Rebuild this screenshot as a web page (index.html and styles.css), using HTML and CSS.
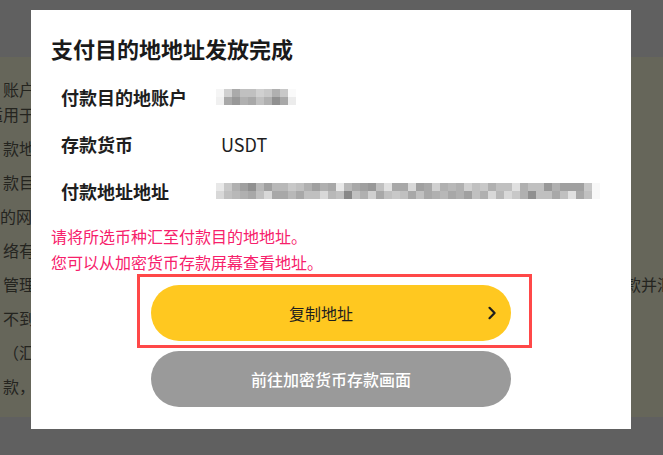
FILE: index.html
```html
<!DOCTYPE html>
<html lang="zh-CN">
<head>
<meta charset="utf-8">
<title>支付目的地地址发放完成</title>
<link rel="stylesheet" href="styles.css">
</head>
<body>
<div class="page">
  <div class="page-header"></div>
  <div class="page-content">
    <p class="para">
      <span class="line">账户名</span>
      <span class="line shift">适用于</span>
    </p>
    <p class="item">款地址</p>
    <p class="item">款目的</p>
    <p class="item shift-s">的网络</p>
    <p class="item">络有误</p>
    <p class="item split"><span>管理员</span><span class="tail">款并汇</span></p>
    <p class="item">不到账</p>
    <p class="item">（汇款</p>
    <p class="item">款，请</p>
  </div>
  <div class="page-footer"></div>
</div>

<div class="modal">
  <h1 class="modal-title">支付目的地地址发放完成</h1>
  <dl class="info">
    <div class="info-row">
      <dt class="info-label">付款目的地账户</dt>
      <dd class="info-value"><span class="blur blur-short"></span></dd>
    </div>
    <div class="info-row">
      <dt class="info-label">存款货币</dt>
      <dd class="info-value">USDT</dd>
    </div>
    <div class="info-row">
      <dt class="info-label">付款地址地址</dt>
      <dd class="info-value"><span class="blur blur-long"></span></dd>
    </div>
  </dl>
  <div class="notes">
    <p class="note">请将所选币种汇至付款目的地地址。</p>
    <p class="note">您可以从加密货币存款屏幕查看地址。</p>
  </div>
  <div class="actions">
    <div class="copy-wrap">
      <button class="btn btn-copy" type="button">
        <span class="btn-label">复制地址</span>
        <svg class="chevron" width="10" height="14" viewBox="0 0 10 14" aria-hidden="true">
          <path d="M2.5 1.8 L7.6 7 L2.5 12.2" fill="none" stroke="#1e1e1e" stroke-width="2.2" stroke-linecap="round" stroke-linejoin="round"/>
        </svg>
      </button>
      <div class="highlight"></div>
    </div>
    <button class="btn btn-gray" type="button">前往加密货币存款画面</button>
  </div>
</div>
</body>
</html>
```

FILE: styles.css
```css
* {
  box-sizing: border-box;
}

html, body {
  margin: 0;
  padding: 0;
}

body {
  width: 663px;
  height: 455px;
  overflow: hidden;
  position: relative;
  font-family: "Noto Sans CJK SC", "Noto Sans", sans-serif;
  background: #606060;
}

/* ---------- dimmed page behind the dialog ---------- */
.page {
  display: flex;
  flex-direction: column;
  height: 455px;
}

.page-header {
  height: 57px;
  background: #606060;
  flex: none;
}

.page-content {
  height: 360px;
  flex: none;
  background: #66665a;
  padding: 20px 0 0 3px;
  overflow: hidden;
  color: #24241f;
  font-size: 16px;
  white-space: nowrap;
}

.page-footer {
  flex: 1;
  background: #606060;
}

.para {
  margin: 0;
  line-height: 25px;
}

.para .line {
  display: block;
}

.item {
  margin: 9px 0 0;
  line-height: 25px;
}

.split {
  display: flex;
  justify-content: space-between;
}

.split .tail {
  margin-right: -10px;
}

.shift {
  margin-left: -16px;
}

.shift-s {
  margin-left: -3px;
}

/* ---------- dialog ---------- */
.modal {
  position: absolute;
  left: 31px;
  top: 10px;
  width: 600px;
  background: #ffffff;
  padding: 23px 20px 22px;
  color: #1e1e1e;
}

.modal-title {
  margin: 0;
  font-size: 22px;
  font-weight: 700;
  line-height: 30px;
  color: #1a1a1a;
}

.info {
  margin: 10px 0 0;
  padding: 0;
}

.info-row {
  display: flex;
  align-items: center;
  height: 47px;
  padding-left: 10px;
}

.info-label {
  width: 160px;
  flex: none;
  margin: 0;
  font-size: 18px;
  font-weight: 700;
  color: #1e1e1e;
}

.info-value {
  margin: 0;
  font-size: 18px;
  color: #1e1e1e;
  display: flex;
  align-items: center;
}

.blur {
  display: block;
  height: 16px;
  margin-left: -5px;
  background-repeat: no-repeat;
  background-size: 100% 8px, 100% 8px;
  background-position: 0 0, 0 8px;
}

.blur-short {
  width: 80px;
  background-image:
    linear-gradient(to right, #f5f5f5 0 8px, #d0d0d0 8px 16px, #aaaaaa 16px 24px, #c0c0c0 24px 32px, #c0c0c0 32px 40px, #d0d0d0 40px 48px, #c8c8c8 48px 56px, #b0b0b0 56px 64px, #c8c8c8 64px 72px, #fafafa 72px 80px),
    linear-gradient(to right, #f0f0f0 0 8px, #a8a8a8 8px 16px, #989898 16px 24px, #b0b0b0 24px 32px, #a8a8a8 32px 40px, #c0c0c0 40px 48px, #b0b0b0 48px 56px, #909090 56px 64px, #a8a8a8 64px 72px, #ececec 72px 80px);
}

.blur-long {
  width: 384px;
  background-image:
    linear-gradient(to right,
      #e8e8e8 0 8px, #c8c8c8 8px 16px, #b0b0b0 16px 24px, #a0a0a0 24px 32px,
      #909090 32px 40px, #b8b8b8 40px 48px, #a0a0a0 48px 56px, #b8b8b8 56px 64px,
      #b8b8b8 64px 72px, #c8c8c8 72px 80px, #c0c0c0 80px 88px, #b0b0b0 88px 96px,
      #a0a0a0 96px 104px, #b0b0b0 104px 112px, #a8a8a8 112px 120px, #e8e8e8 120px 128px,
      #b8b8b8 128px 136px, #a8a8a8 136px 144px, #a0a0a0 144px 152px, #989898 152px 160px,
      #c0c0c0 160px 168px, #e0e0e0 168px 176px, #a8a8a8 176px 184px, #a8a8a8 184px 192px,
      #d8d8d8 192px 200px, #a0a0a0 200px 208px, #a8a8a8 208px 216px, #d0d0d0 216px 224px,
      #b0b0b0 224px 232px, #b8b8b8 232px 240px, #b0b0b0 240px 248px, #d0d0d0 248px 256px,
      #c0c0c0 256px 264px, #c8c8c8 264px 272px, #b0b0b0 272px 280px, #c0c0c0 280px 288px,
      #c0c0c0 288px 296px, #e0e0e0 296px 304px, #b0b0b0 304px 312px, #c0c0c0 312px 320px,
      #c0c0c0 320px 328px, #989898 328px 336px, #b0b0b0 336px 344px, #a0a0a0 344px 352px,
      #a0a0a0 352px 360px, #a0a0a0 360px 368px, #c8c8c8 368px 376px, #f8f8f8 376px 384px),
    linear-gradient(to right,
      #d8d8d8 0 8px, #c0c0c0 8px 16px, #b8b8b8 16px 24px, #b0b0b0 24px 32px,
      #a8a8a8 32px 40px, #c0c0c0 40px 48px, #d8d8d8 48px 56px, #a8a8a8 56px 64px,
      #a8a8a8 64px 72px, #b8b8b8 72px 80px, #a8a8a8 80px 88px, #c0c0c0 88px 96px,
      #c0c0c0 96px 104px, #d8d8d8 104px 112px, #b8b8b8 112px 120px, #c0c0c0 120px 128px,
      #888888 128px 136px, #c0c0c0 136px 144px, #b0b0b0 144px 152px, #d0d0d0 152px 160px,
      #a8a8a8 160px 168px, #c0c0c0 168px 176px, #c8c8c8 176px 184px, #c0c0c0 184px 192px,
      #a8a8a8 192px 200px, #c0c0c0 200px 208px, #a8a8a8 208px 216px, #b0b0b0 216px 224px,
      #b8b8b8 224px 232px, #a8a8a8 232px 240px, #b0b0b0 240px 248px, #a0a0a0 248px 256px,
      #c0c0c0 256px 264px, #b0b0b0 264px 272px, #d8d8d8 272px 280px, #b8b8b8 280px 288px,
      #d8d8d8 288px 296px, #c8c8c8 296px 304px, #b0b0b0 304px 312px, #909090 312px 320px,
      #c0c0c0 320px 328px, #c0c0c0 328px 336px, #a8a8a8 336px 344px, #c0c0c0 344px 352px,
      #e0e0e0 352px 360px, #a8a8a8 360px 368px, #c0c0c0 368px 376px, #f8f8f8 376px 384px);
}

.notes {
  margin-top: 9px;
}

.note {
  margin: 0;
  font-size: 16px;
  line-height: 26px;
  color: #f7206b;
}

.actions {
  margin-top: 10px;
  display: flex;
  flex-direction: column;
  align-items: center;
  gap: 10px;
}

.copy-wrap {
  position: relative;
  width: 360px;
}

.btn {
  display: flex;
  align-items: center;
  width: 360px;
  height: 56px;
  border: none;
  border-radius: 28px;
  font-family: "Noto Sans CJK SC", "Noto Sans", sans-serif;
  font-size: 16px;
  padding: 0;
  cursor: pointer;
}

.btn-copy {
  background: #ffc820;
  color: #1e1e1e;
  padding-left: 4px;
  padding-right: 14px;
}

.btn-copy .btn-label {
  flex: 1;
  text-align: center;
}

.chevron {
  flex: none;
  display: block;
}

.btn-gray {
  justify-content: center;
  background: #9a9a9a;
  color: #ffffff;
  font-weight: 500;
}

.highlight {
  position: absolute;
  top: -11px;
  left: -14px;
  right: -21px;
  bottom: -7px;
  border: 3px solid #ff4848;
  pointer-events: none;
}
```
